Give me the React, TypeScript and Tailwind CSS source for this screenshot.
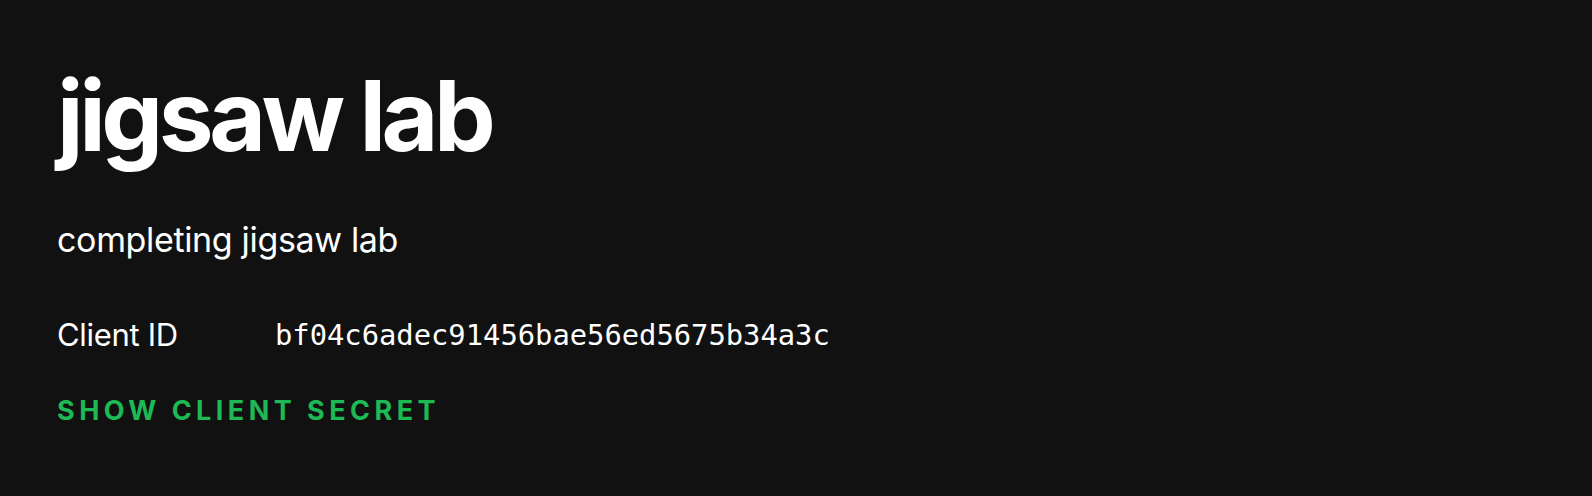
export default function App() {
  return (
    <div className="min-h-[496px] w-full bg-[#111111] px-[57px] pt-[56px] text-white font-['Inter',sans-serif]">
      <h1 className="text-[98px] font-bold leading-[120px] tracking-[-0.045em]">
        jigsaw lab
      </h1>
      <p className="mt-[44px] text-[34px] font-normal leading-[40px] tracking-[-0.01em]">
        completing jigsaw lab
      </p>
      <div className="mt-[57px] flex items-center">
        <span className="w-[218px] text-[31px] leading-[36px] tracking-[-0.01em]">
          Client ID
        </span>
        <span className="font-['DejaVu_Sans_Mono',monospace] text-[28.8px] leading-[36px]">
          bf04c6adec91456bae56ed5675b34a3c
        </span>
      </div>
      <button className="mt-[42px] block text-[27px] font-bold uppercase leading-[32px] tracking-[0.165em] text-[#1db954]">
        Show client secret
      </button>
    </div>
  );
}
